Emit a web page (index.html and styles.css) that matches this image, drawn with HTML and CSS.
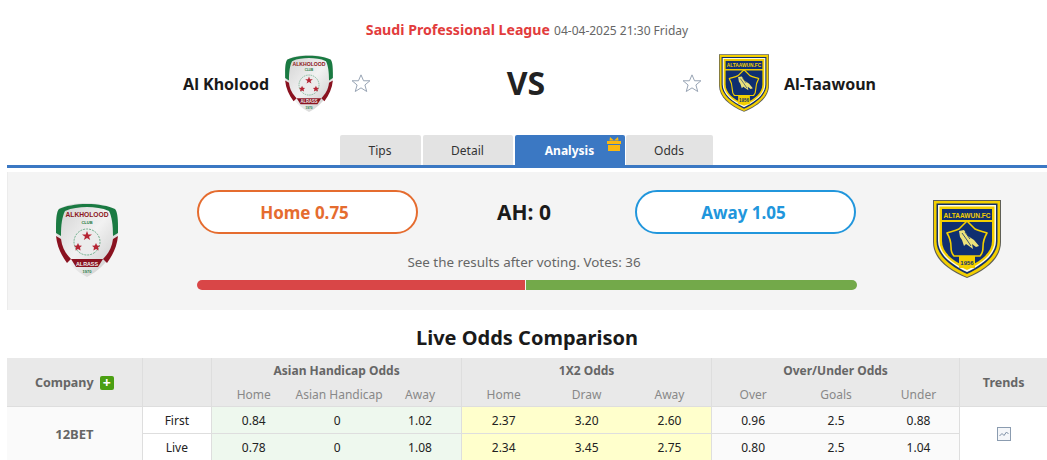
FILE: index.html
```html
<!DOCTYPE html>
<html lang="en">
<head>
<meta charset="utf-8">
<title>Al Kholood vs Al-Taawoun</title>
<link rel="stylesheet" href="styles.css">
</head>
<body>
<svg class="defs" width="0" height="0" aria-hidden="true">
  <defs>
    <linearGradient id="silver" x1="0" y1="0" x2="1" y2="1">
      <stop offset="0" stop-color="#cfcfcf"/>
      <stop offset=".5" stop-color="#f2f2f2"/>
      <stop offset="1" stop-color="#c4c4c4"/>
    </linearGradient>
    <symbol id="logo-kholood" viewBox="0 0 62 74">
      <path d="M31 0C42 0 53 2 59 6C61 8 62 14 62 24C62 47 50 64 31 74C12 64 0 47 0 24C0 14 1 8 3 6C9 2 20 0 31 0Z" fill="url(#silver)"/>
      <path d="M3 6C9 3 20 1 31 1C42 1 53 3 59 6C61 8 62 14 62 24L62 30L57 33C57 22 56 14 53 8C46 5 39 4 31 4C23 4 16 5 9 8C6 14 5 22 5 33L0 30L0 24C0 14 1 8 3 6Z" fill="#1a7a42"/>
      <path d="M0 33L5 36C6 45 10 51 15 56L11 60C5 52 1 43 0 33Z" fill="#8a1220"/>
      <path d="M62 33L57 36C56 45 52 51 47 56L51 60C57 52 61 43 62 33Z" fill="#8a1220"/>
      <path d="M15 56H47L42 64H20Z" fill="#8a1220"/>
      <text x="31" y="14" class="k-top" textLength="43" lengthAdjust="spacingAndGlyphs">ALKHOLOOD</text>
      <text x="31" y="21" class="k-club">CLUB</text>
      <circle cx="31" cy="39" r="13" fill="#ececec" stroke="#6fae8c" stroke-width="1" stroke-dasharray="2 1"/>
      <path d="M31 28L32.300 31.500L36 31.500L33 33.700L34.200 37L31 35L27.800 37L29 33.700L26 31.500L29.700 31.500Z" fill="#b52534"/>
      <path d="M22 40L23.200 42.500L26 42.700L24 44.600L24.600 47.500L22 46L19.400 47.500L20 44.600L18 42.700L20.800 42.500Z" fill="#b52534"/>
      <path d="M40 40L41.200 42.500L44 42.700L42 44.600L42.600 47.500L40 46L37.400 47.500L38 44.600L36 42.700L38.800 42.500Z" fill="#b52534"/>
      <text x="31" y="62.500" class="k-band" textLength="22" lengthAdjust="spacingAndGlyphs">ALRASS</text>
      <text x="31" y="70" class="k-year">1970</text>
    </symbol>
    <symbol id="logo-taawoun" viewBox="0 0 68 78">
      <path d="M0 0H68V42C68 58 54 70 34 78C14 70 0 58 0 42Z" fill="#5f5f55"/>
      <path d="M1 1H67V42C67 57 53 69 34 77C15 69 1 57 1 42Z" fill="#f3cf00"/>
      <path d="M3.500 3.500H64.500V41.500C64.500 55 51 66 34 74C17 66 3.500 55 3.500 41.500Z" fill="#13306b"/>
      <path d="M5 5H63V41C63 54 50 64.500 34 72C18 64.500 5 54 5 41Z" fill="#fdfbe8"/>
      <path d="M6.500 6.500H61.500V41C61.500 53 50 63 34 70C18 63 6.500 53 6.500 41Z" fill="#f3cf00"/>
      <path d="M9 22H59V41C59 52 49 61 34 67C19 61 9 52 9 41Z" fill="#0f2f70"/>
      <rect x="9" y="9" width="50" height="11" fill="#0f2f70"/>
      <text x="34" y="17.500" class="t-top" textLength="47" lengthAdjust="spacingAndGlyphs">ALTAAWUN.FC</text>
      <path d="M34 21L42 29C46 31 52 32 54 33C51 38 50 42 50 47C50 51 49 54 47 56H21C19 54 18 51 18 47C18 42 17 38 14 33C16 32 22 31 26 29Z" fill="#0f2f70" stroke="#f3cf00" stroke-width="1.600" stroke-linejoin="round"/>
      <path d="M26 31L31 30L35 36L41 40L46 46L43 47L39 44L40 49L36 46L33 44L31 46L29 40L27 37Z" fill="#ebe27a"/>
      <path d="M29 33L34 40L38 46M32 32L37 39" fill="none" stroke="#0f2f70" stroke-width=".8"/>
      <rect x="26" y="56" width="16" height="12" fill="#f3cf00"/>
      <text x="34" y="65" class="t-year">1956</text>
    </symbol>
    <symbol id="star" viewBox="0 0 22 22">
      <path d="M11 1.500L13.800 8H20.800L15.300 12.600L17.300 19.800L11 15.800L4.700 19.800L6.700 12.600L1.200 8H8.200Z" fill="#fff" stroke="#98a4b4" stroke-width="1.100" stroke-linejoin="round"/>
    </symbol>
  </defs>
</svg>

<header class="match">
  <p class="league"><span class="league-name">Saudi Professional League</span> <span class="kickoff">04-04-2025 21:30 Friday</span></p>
  <div class="teams">
    <div class="team team-home">
      <span class="team-name">Al Kholood</span>
      <svg class="logo-small-k"><use href="#logo-kholood"/></svg>
      <svg class="star"><use href="#star"/></svg>
    </div>
    <div class="versus">VS</div>
    <div class="team team-away">
      <svg class="star"><use href="#star"/></svg>
      <svg class="logo-small-t"><use href="#logo-taawoun"/></svg>
      <span class="team-name">Al-Taawoun</span>
    </div>
  </div>
</header>

<nav class="tabs">
  <a class="tab tab-tips">Tips</a>
  <a class="tab tab-detail">Detail</a>
  <a class="tab tab-analysis">Analysis
    <svg class="gift" viewBox="0 0 14 14">
      <rect x="0" y="4" width="14" height="3" fill="#fbb810"/>
      <rect x="1" y="8" width="12" height="6" fill="#fbb810"/>
      <path d="M3 0L7 3.500L11 0L11.500 3.500H2.500Z" fill="#fbb810"/>
    </svg>
  </a>
  <a class="tab tab-odds">Odds</a>
</nav>

<section class="vote">
  <svg class="vote-logo-k"><use href="#logo-kholood"/></svg>
  <div class="vote-main">
    <div class="vote-row">
      <button class="pick pick-home">Home 0.75</button>
      <strong class="ah">AH: 0</strong>
      <button class="pick pick-away">Away 1.05</button>
    </div>
    <p class="vote-note">See the results after voting. Votes: 36</p>
    <div class="bar"><span class="bar-home"></span><span class="bar-away"></span></div>
  </div>
  <svg class="vote-logo-t"><use href="#logo-taawoun"/></svg>
</section>

<h2 class="title">Live Odds Comparison</h2>

<table class="odds">
  <colgroup>
    <col class="c-company"><col class="c-type">
    <col class="c-first"><col class="c-b"><col class="c-b">
    <col class="c-b"><col class="c-b"><col class="c-b">
    <col class="c-b"><col class="c-b"><col class="c-last">
    <col class="c-trends">
  </colgroup>
  <thead>
    <tr class="head-top">
      <th rowspan="2" class="th-main">Company <span class="plus">+</span></th>
      <th rowspan="2"></th>
      <th colspan="3" class="th-group">Asian Handicap Odds</th>
      <th colspan="3" class="th-group">1X2 Odds</th>
      <th colspan="3" class="th-group">Over/Under Odds</th>
      <th rowspan="2" class="th-main">Trends</th>
    </tr>
    <tr class="head-sub">
      <th>Home</th><th>Asian Handicap</th><th class="end">Away</th>
      <th>Home</th><th>Draw</th><th class="end">Away</th>
      <th>Over</th><th>Goals</th><th class="end">Under</th>
    </tr>
  </thead>
  <tbody>
    <tr>
      <td rowspan="2" class="company">12BET</td>
      <td class="type">First</td>
      <td class="green">0.84</td><td class="green">0</td><td class="green end">1.02</td>
      <td class="yellow">2.37</td><td class="yellow">3.20</td><td class="yellow end">2.60</td>
      <td class="plain">0.96</td><td class="plain">2.5</td><td class="plain end">0.88</td>
      <td rowspan="2" class="trend">
        <svg class="chart" viewBox="0 0 14 14"><rect x=".5" y=".5" width="13" height="13" fill="#f4f6f9" stroke="#8b9cb0"/><path d="M2.500 9L5 6.500L7 8.500L9.500 5L11.500 7" fill="none" stroke="#7d8fa5"/></svg>
      </td>
    </tr>
    <tr>
      <td class="type">Live</td>
      <td class="green">0.78</td><td class="green">0</td><td class="green end">1.08</td>
      <td class="yellow">2.34</td><td class="yellow">3.45</td><td class="yellow end">2.75</td>
      <td class="plain">0.80</td><td class="plain">2.5</td><td class="plain end">1.04</td>
    </tr>
  </tbody>
</table>
</body>
</html>
```
FILE: styles.css
```css
* { box-sizing: border-box; }
html, body { margin: 0; padding: 0; height: 460px; overflow: hidden; background: #fff; }
body { font-family: "Noto Sans", Tahoma, sans-serif; color: #222; width: 1047px; }
.defs { display: block; height: 0; }

.match { height: 135px; padding-top: 20px; }
.league { margin: 0; height: 20px; line-height: 20px; text-align: center; font-size: 12px; padding-left: 7px; }
.league-name { color: #e23c3c; font-size: 14.150px; font-weight: 700; }
.kickoff { color: #666; margin-left: 1px; }

.teams { display: grid; grid-template-columns: 371px 311px 1fr; margin-top: 14px; height: 58px; align-items: center; }
.team { display: flex; align-items: center; }
.team-home { justify-content: flex-end; }
.team-name { font-size: 16px; font-weight: 700; color: #1a1a1a; position: relative; top: 1px; }
.team-home .team-name { margin-right: 16px; }
.team-away .team-name { margin-left: 15px; }
.logo-small-k { width: 48px; height: 57px; margin-right: 18px; }
.logo-small-t { width: 50px; height: 58px; margin-left: 17px; }
.star { width: 20px; height: 21px; }
.versus { text-align: center; font-size: 32px; line-height: 58px; font-weight: 700; color: #222; padding-right: 1px; }

.tabs { margin-left: 7px; height: 33px; display: flex; justify-content: center; padding-right: 2px; border-bottom: 3px solid #3b78c3; }
.tab { height: 30px; line-height: 31px; text-align: center; font-size: 12px; color: #333; background: #e3e3e3; border-radius: 2px 2px 0 0; position: relative; }
.tab-tips { width: 81px; margin-right: 2px; }
.tab-detail { width: 90px; margin-right: 2px; }
.tab-analysis { width: 110px; margin-right: 1px; background: #3b78c3; color: #fff; font-weight: 700; }
.tab-odds { width: 87px; }
.gift { position: absolute; left: 92px; top: 2px; width: 14px; height: 14px; }

.vote { margin: 4px 0 0 7px; height: 138px; background: #f4f4f4; border-left: 1px solid #ececec; display: flex; align-items: flex-start; }
.vote-logo-k { width: 62px; height: 74px; margin: 31px 79px 0 48px; flex: none; }
.vote-main { width: 660px; flex: none; padding-top: 18px; }
.vote-logo-t { width: 68px; height: 78px; margin: 28px 0 0 76px; flex: none; }
.vote-row { display: flex; justify-content: space-between; align-items: center; width: 659px; }
.pick { width: 221px; height: 44px; border-radius: 22px; background: #fff; font-family: inherit; font-size: 17px; font-weight: 700; }
.pick-home { border: 2px solid #e56c2f; color: #e56c2f; padding: 0 6px 0 0; }
.pick-away { border: 2px solid #2196dc; color: #2196dc; padding: 0 4px 0 0; }
.ah { font-size: 21px; color: #1a1a1a; padding-right: 5px; }
.vote-note { margin: 18px 0 0; height: 20px; line-height: 20px; text-align: center; font-size: 13.400px; color: #666; padding-right: 6px; }
.bar { display: flex; height: 10px; margin-top: 8px; gap: 1px; }
.bar-home { width: 328px; background: #d94647; border-radius: 5px 0 0 5px; }
.bar-away { flex: 1; background: #73a94a; border-radius: 0 5px 5px 0; }

.title { margin: 13px 0 0 7px; height: 30px; line-height: 30px; text-align: center; font-size: 20px; font-weight: 700; color: #1a1a1a; }

.odds { margin: 5px 0 0 7px; width: 1040px; table-layout: fixed; border-collapse: collapse; font-size: 12px; }
.c-company { width: 135px; }
.c-type { width: 69px; }
.c-first { width: 84px; }
.c-b { width: 83px; }
.c-last { width: 82px; }
.c-trends { width: 87px; }
.odds th, .odds td { border: 1px solid #dedede; text-align: center; padding: 0; white-space: nowrap; }
.odds th { background: #e9e9e9; font-weight: 400; }
.odds tr > :first-child { border-left: 0; }
.odds tr > :last-child { border-right: 0; }
.head-top th { border-top: 0; height: 25px; }
.head-sub th { height: 23px; color: #888; border-top: 0; border-left: 0; border-right: 0; }
.head-sub th.end { border-right: 1px solid #dedede; }
.head-top .th-group { border-bottom: 0; }
.th-group { font-size: 12px; font-weight: 700 !important; color: #666; }
.th-main { font-size: 12.500px; font-weight: 700 !important; color: #666; padding-top: 2px !important; }
.plus { display: inline-block; width: 14px; height: 14px; line-height: 13px; margin-left: 3px; border-radius: 2px; background: #4b9f12; color: #fff; font-size: 14px; font-weight: 700; vertical-align: -1px; }
.odds td { height: 27px; background: #fafafa; color: #222; padding-top: 1px; }
.odds td.company { font-size: 13px; font-weight: 700; color: #666; }
.odds td.type { background: #fff; }
.odds td.green, .odds td.yellow, .odds td.plain { border-left: 0; border-right: 0; }
.odds td.end { border-right: 1px solid #dedede; }
.odds td.green { background: #eef8ee; }
.odds td.yellow { background: #ffffcc; }
.odds td.trend { background: #fff; }
.chart { width: 14px; height: 14px; display: block; margin: 0 auto; }

.k-top, .k-club, .k-band, .k-year, .t-top, .t-year { font-family: "Liberation Sans", sans-serif; font-weight: 700; text-anchor: middle; }
.k-top { font-size: 7px; fill: #8c1420; }
.k-club { font-size: 4px; fill: #1a7a42; }
.k-band { font-size: 6px; fill: #eee; }
.k-year { font-size: 4px; fill: #1a7a42; }
.t-top { font-size: 7.500px; fill: #f3cf00; }
.t-year { font-size: 6px; fill: #0f2f70; }
```
